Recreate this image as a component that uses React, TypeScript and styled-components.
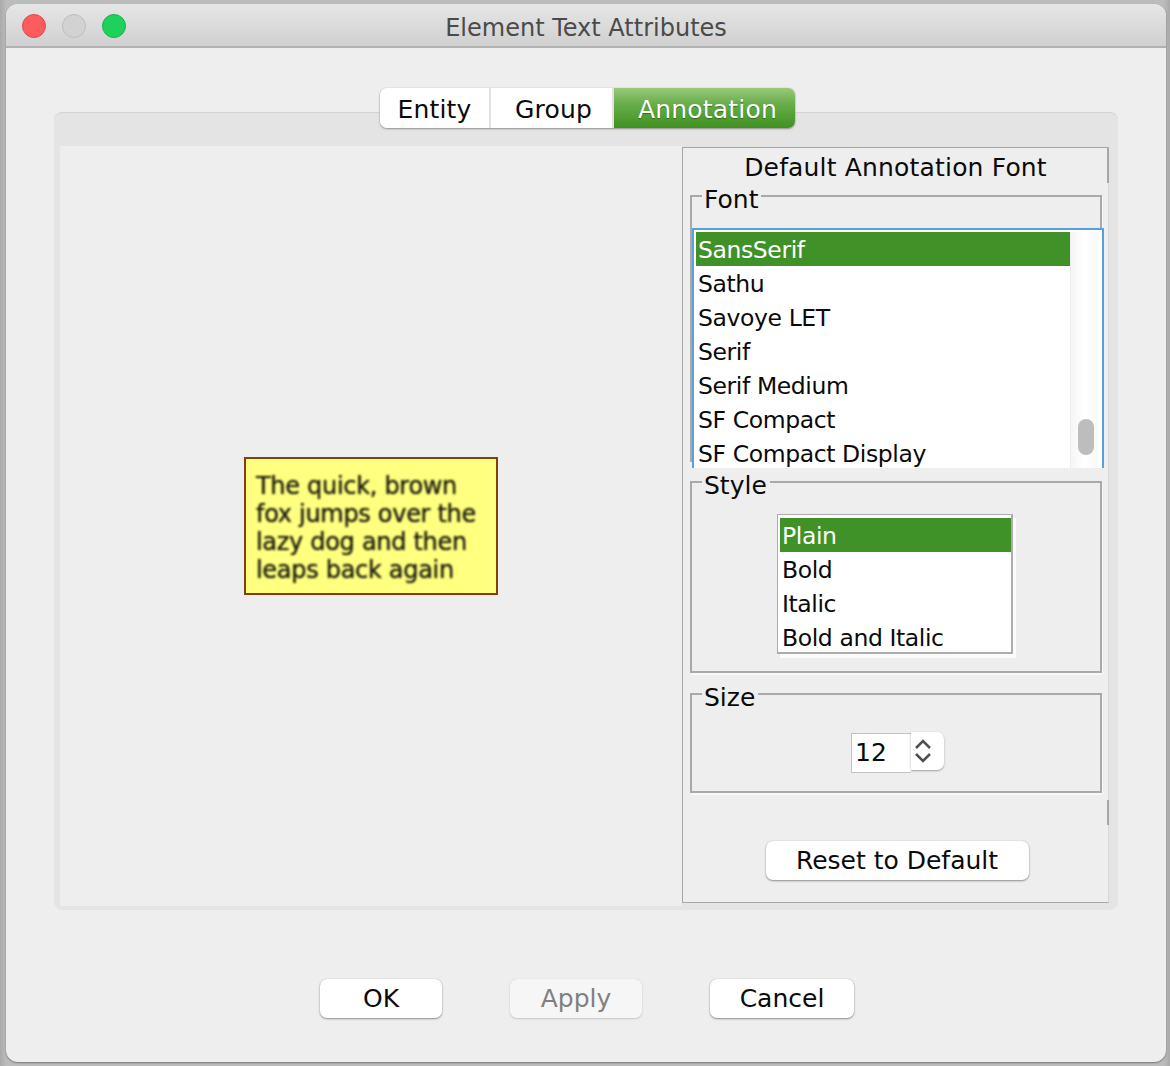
import React from "react";
import styled, { createGlobalStyle } from "styled-components";

const FONT = `"DejaVu Sans", "Noto Sans", sans-serif`;

const GlobalStyle = createGlobalStyle`
  html, body {
    margin: 0;
    padding: 0;
    width: 1170px;
    height: 1066px;
    overflow: hidden;
    background: linear-gradient(90deg, #a9a9a9 0, #bcbcbc 6px, #bcbcbc 1164px, #a9a9a9 1170px);
  }
  * { box-sizing: border-box; }
`;

const Screen = styled.div`
  width: 1170px;
  height: 1066px;
  padding: 4px 4px 4px 6px;
  font-family: ${FONT};
  font-size: 25px;
  color: #0a0a0a;
`;

const Window = styled.div`
  width: 1160px;
  height: 1058px;
  display: flex;
  flex-direction: column;
  background: #eeeeee;
  border-radius: 12px;
  overflow: hidden;
  box-shadow: 0 1px 2px #777;
`;

const TitleBar = styled.div`
  position: relative;
  flex: none;
  height: 44px;
  display: flex;
  align-items: center;
  justify-content: center;
  padding-top: 6px;
  background: linear-gradient(#e6e6e6, #d0d0d0);
  border-bottom: 2px solid #b2b2b2;
  color: #4a4a4a;
`;

const Lights = styled.div`
  position: absolute;
  left: 16px;
  top: 10px;
  display: flex;
  gap: 16px;
`;

const Light = styled.span<{ $fill: string; $edge: string }>`
  width: 24px;
  height: 24px;
  border-radius: 50%;
  background: ${(p) => p.$fill};
  border: 1px solid ${(p) => p.$edge};
`;

const Title = styled.span`
  font-size: 24px;
`;

const Body = styled.div`
  flex: 1;
  display: flex;
  flex-direction: column;
  padding: 64px 48px 0;
`;

const TabPane = styled.div`
  position: relative;
  height: 798px;
  display: flex;
  padding: 33px 6px 4px;
  background: #e4e4e4;
  border-radius: 8px;
  border-top: 1px solid #d4d4d4;
`;

const Segments = styled.div`
  position: absolute;
  top: -25px;
  left: 326px;
  height: 40px;
  display: flex;
  border-radius: 7px;
  overflow: hidden;
  box-shadow: 0 1px 2px #8f8f8f, 0 0 1px #b5b5b5;
`;

const Segment = styled.div<{ $w: number; $pad: number; $active?: boolean }>`
  width: ${(p) => p.$w}px;
  display: flex;
  align-items: center;
  justify-content: center;
  padding: 2px 0 0 ${(p) => p.$pad}px;
  letter-spacing: 0.2px;
  background: ${(p) => (p.$active ? "linear-gradient(#9ac97a, #68ad4b 40%, #3f921f)" : "#fff")};
  color: ${(p) => (p.$active ? "#fff" : "#0a0a0a")};
  text-shadow: ${(p) => (p.$active ? "0 1px 1px #2f6d18" : "none")};
  border-right: ${(p) => (p.$active ? "none" : "2px solid #e2e2e2")};
`;

const Canvas = styled.div`
  width: 622px;
  display: flex;
  align-items: center;
  justify-content: center;
  background: #eeeeee;
`;

const Note = styled.div`
  width: 254px;
  height: 138px;
  padding: 13px 10px;
  background: #ffff80;
  border: 2px solid #83400f;
  white-space: nowrap;
`;

const NoteText = styled.div`
  font-size: 24px;
  line-height: 28px;
  letter-spacing: -0.3px;
  color: #1d1d0c;
  text-shadow: 0 0 1px #3a3a18;
  filter: blur(0.8px);
`;

const SidePanel = styled.div`
  position: relative;
  width: 427px;
  height: 756px;
  margin-top: 1px;
  display: flex;
  flex-direction: column;
  padding: 0 7px;
  background: #eeeeee;
  border: 1px solid #a6a6a6;
  border-right-color: #d8d8d8;
`;

const RightTick = styled.span<{ $top: number; $h: number }>`
  position: absolute;
  right: -1px;
  top: ${(p) => p.$top}px;
  width: 2px;
  height: ${(p) => p.$h}px;
  background: #a6a6a6;
`;

const PanelTitle = styled.div`
  flex: none;
  height: 37px;
  display: flex;
  align-items: center;
  justify-content: center;
  padding-top: 1px;
  letter-spacing: 0.17px;
`;

const Group = styled.fieldset<{ $h: number; $gap: number }>`
  height: ${(p) => p.$h}px;
  margin: ${(p) => p.$gap}px 0 0;
  padding: 0;
  width: 412px;
  min-width: 0;
  flex: none;
  border: 2px solid #a9a9a9;
  border-radius: 0;
  position: relative;
  display: flex;
  justify-content: center;
  box-shadow: 1px 2px 0 #f7f7f7;
`;

const Legend = styled.legend`
  margin-left: 10px;
  padding: 8px 3px 0 2px;
  font-size: 25px;
  line-height: 29px;
`;

const FontList = styled.div`
  position: absolute;
  left: 0;
  top: 14px;
  width: 412px;
  height: 240px;
  display: flex;
  padding: 2px 0 0 2px;
  background: #fff;
  border: solid #5b9fdc;
  border-width: 2px 2px 0;
  overflow: hidden;
`;

const Rows = styled.div`
  width: 374px;
  flex: none;
`;

const Row = styled.div<{ $active?: boolean }>`
  height: 34px;
  line-height: 34px;
  padding: 1px 0 0 2px;
  font-size: 23.5px;
  letter-spacing: -0.4px;
  white-space: nowrap;
  background: ${(p) => (p.$active ? "#3f9128" : "transparent")};
  color: ${(p) => (p.$active ? "#fff" : "#0a0a0a")};
`;

const Track = styled.div`
  position: relative;
  flex: 1;
  margin-right: 4px;
  background: linear-gradient(90deg, #f6f6f6, #fff 50%, #f8f8f8);
  border-left: 1px solid #ececec;
`;

const Thumb = styled.span`
  position: absolute;
  left: 7px;
  top: 187px;
  width: 16px;
  height: 36px;
  border-radius: 8px;
  background: #bdbdbd;
`;

const StyleList = styled.div`
  width: 236px;
  height: 140px;
  margin: 14px 2px 0 0;
  padding: 3px 0 0 2px;
  background: #fff;
  border: 1px solid #acacac;
  border-width: 1px 2px 2px 1px;
  box-shadow: 3px 4px 0 #fbfbfb;
`;

const Spinner = styled.div`
  display: flex;
  align-items: flex-start;
  height: 40px;
  margin: 21px 0 0 3px;
`;

const SpinInput = styled.div`
  width: 60px;
  height: 40px;
  padding-left: 3px;
  line-height: 38px;
  background: #fff;
  border: 1px solid #c2c2c2;
  border-right: none;
`;

const SpinArrows = styled.div`
  width: 33px;
  height: 38px;
  margin-top: -1px;
  padding-right: 9px;
  display: flex;
  align-items: center;
  justify-content: center;
  background: #fff;
  border-radius: 0 7px 7px 0;
  box-shadow: 0 1px 2px #9f9f9f;
`;

const ResetRow = styled.div`
  display: flex;
  justify-content: center;
  margin-top: 48px;
  padding-left: 3px;
`;

const Button = styled.div<{ $w: number; $disabled?: boolean }>`
  width: ${(p) => p.$w}px;
  height: 39px;
  display: flex;
  align-items: center;
  justify-content: center;
  border-radius: 7px;
  background: ${(p) => (p.$disabled ? "#f6f6f6" : "#fff")};
  color: ${(p) => (p.$disabled ? "#808080" : "#0a0a0a")};
  box-shadow: ${(p) =>
    p.$disabled ? "0 1px 2px #c4c4c4, 0 0 1px #cfcfcf" : "0 1px 2px #8f8f8f, 0 0 1px #aaa"};
`;

const Footer = styled.div`
  display: flex;
  gap: 68px;
  margin-top: 69px;
  padding-left: 266px;
`;

const fonts = ["SansSerif", "Sathu", "Savoye LET", "Serif", "Serif Medium", "SF Compact", "SF Compact Display"];
const styles = ["Plain", "Bold", "Italic", "Bold and Italic"];

export default function App() {
  return (
    <Screen>
      <GlobalStyle />
      <Window>
        <TitleBar>
          <Lights>
            <Light $fill="#fc5c5e" $edge="#e0484c" />
            <Light $fill="#d2d2d2" $edge="#bcbcbc" />
            <Light $fill="#1ed15a" $edge="#17b34a" />
          </Lights>
          <Title>Element Text Attributes</Title>
        </TitleBar>
        <Body>
          <TabPane>
            <Segments>
              <Segment $w={111} $pad={0}>Entity</Segment>
              <Segment $w={123} $pad={4}>Group</Segment>
              <Segment $w={181} $pad={6} $active>Annotation</Segment>
            </Segments>
            <Canvas>
              <Note>
                <NoteText>
                  The quick, brown
                  <br />
                  fox jumps over the
                  <br />
                  lazy dog and then
                  <br />
                  leaps back again
                </NoteText>
              </Note>
            </Canvas>
            <SidePanel>
              <RightTick $top={0} $h={35} />
              <RightTick $top={652} $h={25} />
              <PanelTitle>Default Annotation Font</PanelTitle>
              <Group $h={285} $gap={-8}>
                <Legend>Font</Legend>
                <FontList>
                  <Rows>
                    {fonts.map((f, i) => (
                      <Row key={f} $active={i === 0}>{f}</Row>
                    ))}
                  </Rows>
                  <Track>
                    <Thumb />
                  </Track>
                </FontList>
              </Group>
              <Group $h={210} $gap={1}>
                <Legend>Style</Legend>
                <StyleList>
                  {styles.map((s, i) => (
                    <Row key={s} $active={i === 0}>{s}</Row>
                  ))}
                </StyleList>
              </Group>
              <Group $h={118} $gap={2}>
                <Legend>Size</Legend>
                <Spinner>
                  <SpinInput>12</SpinInput>
                  <SpinArrows>
                    <svg width="18" height="26" viewBox="0 0 18 26" fill="none" stroke="#4f4f4f" strokeWidth="2.5">
                      <path d="M2 10 L9 3 L16 10" />
                      <path d="M2 16 L9 23 L16 16" />
                    </svg>
                  </SpinArrows>
                </Spinner>
              </Group>
              <ResetRow>
                <Button $w={263}>Reset to Default</Button>
              </ResetRow>
            </SidePanel>
          </TabPane>
          <Footer>
            <Button $w={122}>OK</Button>
            <Button $w={132} $disabled>Apply</Button>
            <Button $w={144}>Cancel</Button>
          </Footer>
        </Body>
      </Window>
    </Screen>
  );
}
